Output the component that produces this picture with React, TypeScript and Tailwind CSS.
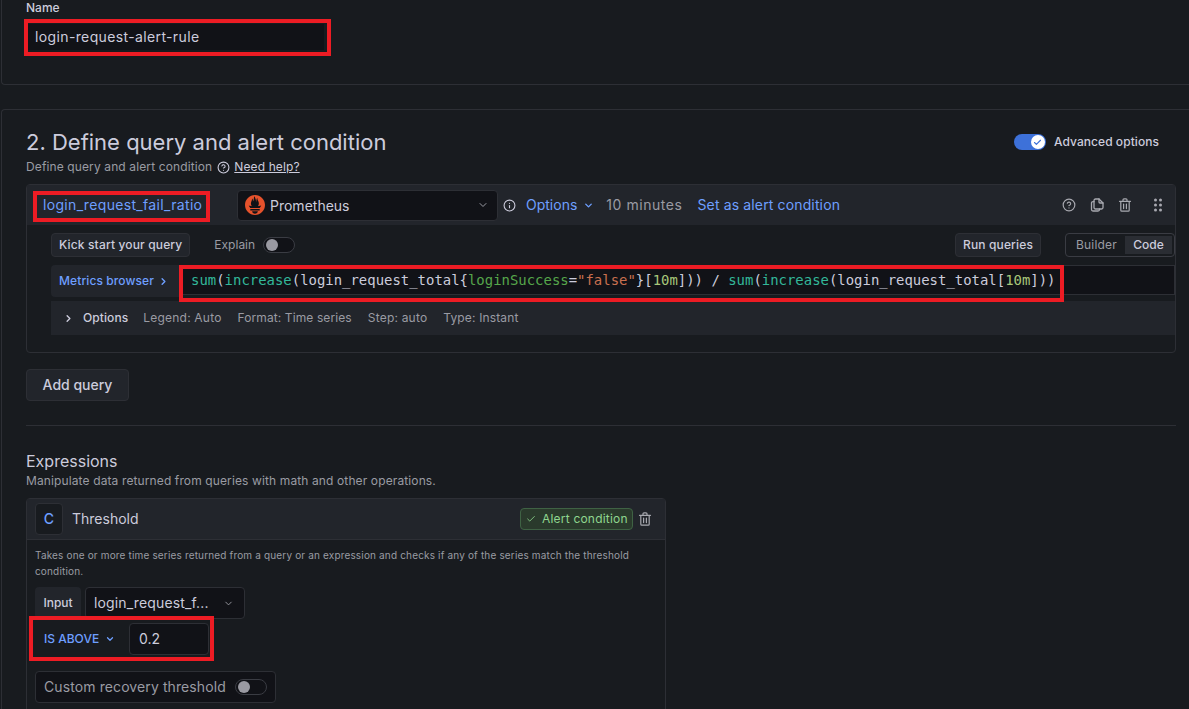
import React from "react";
import { ChevronDown, ChevronRight, CircleHelp, Info, Check } from "lucide-react";
import { SiPrometheus } from "react-icons/si";

function Mark({ cls }: { cls: string }) {
  return <div className={"absolute border-[4px] border-[#ed1c24] pointer-events-none " + cls} />;
}

function Toggle({ cls = "" }: { cls?: string }) {
  return (
    <span className={"flex items-center w-[32px] h-[16px] rounded-full border border-[#3a3c43] bg-[#111217] pl-[2px] " + cls}>
      <span className="w-[12px] h-[12px] rounded-full bg-[#9a9aa2]" />
    </span>
  );
}

function CopyIcon() {
  return (
    <svg viewBox="0 0 14 14" className="w-[14px] h-[14px]" fill="none" stroke="currentColor" strokeWidth="1.3" strokeLinejoin="round" strokeLinecap="round">
      <path d="M4 3.6H3A1.5 1.5 0 0 0 1.5 5.1v6.4A1.5 1.5 0 0 0 3 13h5a1.5 1.5 0 0 0 1.5-1.5V11" />
      <path d="M4 2.5A1.5 1.5 0 0 1 5.5 1H9l4 4v4.5a1.5 1.5 0 0 1-1.5 1.5h-6A1.5 1.5 0 0 1 4 9.5z" />
      <path d="M9 1v3a1 1 0 0 0 1 1h3" />
    </svg>
  );
}

function TrashIcon() {
  return (
    <svg viewBox="0 0 14 14" className="w-[14px] h-[14px]" fill="none" stroke="currentColor" strokeWidth="1.2" strokeLinejoin="round" strokeLinecap="round">
      <path d="M1.5 3.3h11M5 3.3V1.8a1 1 0 0 1 1-1h2a1 1 0 0 1 1 1v1.5M2.8 3.3v8.9a1 1 0 0 0 1 1h6.4a1 1 0 0 0 1-1V3.3M5.6 6v4.6M8.4 6v4.6" />
    </svg>
  );
}

function DragIcon() {
  return (
    <svg viewBox="0 0 16 16" className="w-[16px] h-[16px] ml-[4px]" fill="currentColor">
      <circle cx="5.5" cy="3" r="1.5" />
      <circle cx="10.5" cy="3" r="1.5" />
      <circle cx="5.5" cy="8" r="1.5" />
      <circle cx="10.5" cy="8" r="1.5" />
      <circle cx="5.5" cy="13" r="1.5" />
      <circle cx="10.5" cy="13" r="1.5" />
    </svg>
  );
}

export default function App() {
  return (
    <div className="relative h-[709px] w-[1189px] overflow-hidden bg-[#181b1f] text-[#ccccdc] text-sm" style={{ fontFamily: "Inter, 'Noto Sans', sans-serif" }}>
      <section className="h-[85px] ml-px border-l border-b border-[#2d2f35] rounded-bl-sm pl-[24px] pt-[1px]">
        <div className="text-xs font-medium leading-[13px] h-[23px]">Name</div>
        <div className="w-[298px] h-[26px] bg-[#111217] pl-[9px] flex items-center text-sm tracking-[0.37px]">login-request-alert-rule</div>
      </section>

      <section className="mt-[24px] ml-px h-[620px] border-l border-t border-[#2d2f35] rounded-tl-sm pl-[24px] pr-[13px]">
        <div className="flex items-start justify-between pt-[19px] h-[47px]">
          <h2 className="text-[22px] leading-[26px] font-normal">2. Define query and alert condition</h2>
          <div className="flex items-center gap-[8px] pr-[17px] pt-[5px]">
            <span className="flex items-center justify-end w-[32px] h-[16px] rounded-full bg-[#3d71d9] pr-[1px]">
              <span className="flex items-center justify-center w-[14px] h-[14px] rounded-full bg-white">
                <Check className="w-[9px] h-[9px] text-[#3d71d9]" strokeWidth={3} />
              </span>
            </span>
            <span className="text-xs font-medium tracking-[0.06px]">Advanced options</span>
          </div>
        </div>
        <div className="flex items-center text-xs text-[#9a9ba3] mt-[2px] h-[16px] tracking-[0.12px]">
          <span>Define query and alert condition</span>
          <CircleHelp className="ml-[5px] w-[13px] h-[13px] text-[#ccccdc]" />
          <span className="ml-[4px] underline text-[#ccccdc]">Need help?</span>
        </div>

        <div className="mt-[9px] h-[169px] border border-[#2d2f35] rounded-sm">
          <div className="flex items-center h-[40px] bg-[#22252b] pl-[16px] pr-[9px]">
            <span className="w-[194px] text-sm text-[#6e9fff] tracking-[0.33px]">login_request_fail_ratio</span>
            <div className="flex items-center w-[261px] h-[31px] bg-[#111217] border border-[#2d2f35] rounded-sm pl-[7px] pr-[8px]">
              <SiPrometheus className="w-[20px] h-[20px] text-[#e6522c]" />
              <span className="ml-[5px] flex-1 text-sm pt-px">Prometheus</span>
              <ChevronDown className="w-[12px] h-[12px] text-[#9a9ba3]" />
            </div>
            <Info className="ml-[5px] w-[13px] h-[13px]" />
            <span className="ml-[10px] text-[#6e9fff]">Options</span>
            <ChevronDown className="ml-[6px] w-[11px] h-[11px] text-[#6e9fff]" strokeWidth={3} />
            <span className="ml-[12px] text-[#9a9ba3] tracking-[0.55px]">10 minutes</span>
            <span className="ml-[15px] text-[#6e9fff] tracking-[0.14px]">Set as alert condition</span>
            <div className="ml-auto flex items-center gap-[14px] text-[#a8a9b0]">
              <CircleHelp className="w-[14px] h-[14px]" />
              <CopyIcon />
              <TrashIcon />
              <DragIcon />
            </div>
          </div>

          <div className="pl-[24px]">
            <div className="flex items-center h-[24px] mt-[8px] text-xs font-medium">
              <span className="flex items-center h-[24px] px-[7px] bg-[#22252b] border border-[#2d2f35] rounded-sm tracking-[0.15px]">Kick start your query</span>
              <span className="ml-[24px] text-[#9a9ba3] font-normal">Explain</span>
              <Toggle cls="ml-[8px]" />
              <span className="ml-auto flex items-center h-[24px] w-[86px] justify-center bg-[#22252b] border border-[#2d2f35] rounded-sm tracking-[0.15px]">Run queries</span>
              <div className="ml-[24px] flex items-center h-[24px] w-[110px] border border-[#3a3c43] rounded-sm p-[2px] font-normal">
                <span className="flex-1 text-center text-[#9a9ba3] tracking-[0.2px]">Builder</span>
                <span className="w-[47px] text-center leading-[18px] bg-[#2a2d33] font-medium">Code</span>
              </div>
            </div>

            <div className="flex h-[32px] mt-[8px]">
              <span className="flex items-center gap-[4px] w-[130px] pl-[8px] bg-[#22252b] text-xs font-medium text-[#6e9fff] rounded-l-sm tracking-[0.1px]">
                Metrics browser
                <ChevronRight className="w-[11px] h-[11px]" strokeWidth={3} />
              </span>
              <div className="flex-1 h-[30px] flex items-center bg-[#111217] border border-[#2d2f35] pl-[9px] pt-[1px] text-[13.95px] whitespace-pre" style={{ fontFamily: "'DejaVu Sans Mono', monospace" }}>
                <span className="text-[#33b89a]">sum</span>(<span className="text-[#33b89a]">increase</span>(login_request_total{"{"}<span className="text-[#56a64b]">loginSuccess</span>=<span className="text-[#c9704f]">"false"</span>{"}"}[<span className="text-[#a8c77a]">10m</span>])) / <span className="text-[#33b89a]">sum</span>(<span className="text-[#33b89a]">increase</span>(login_request_total[<span className="text-[#a8c77a]">10m</span>]))
              </div>
            </div>

            <div className="flex items-center h-[34px] mt-[4px] bg-[#22252b] text-xs text-[#9a9ba3] pl-[12px]">
              <ChevronRight className="w-[11px] h-[11px] text-[#ccccdc]" strokeWidth={3} />
              <span className="ml-[9px] font-medium text-[#ccccdc] tracking-[0.1px]">Options</span>
              <span className="ml-[15px] tracking-[0.2px]">Legend: Auto</span>
              <span className="ml-[16px] tracking-[0.1px]">Format: Time series</span>
              <span className="ml-[16px] tracking-[0.2px]">Step: auto</span>
              <span className="ml-[16px] tracking-[0.15px]">Type: Instant</span>
            </div>
          </div>
        </div>

        <button className="mt-[16px] block h-[32px] w-[103px] bg-[#22252b] border border-[#2d2f35] rounded-sm text-sm font-medium">Add query</button>

        <div className="mt-[24px] border-t border-[#2d2f35]" />

        <h3 className="mt-[26px] text-base leading-[19px]">Expressions</h3>
        <p className="mt-[2px] text-xs text-[#9a9ba3] leading-[16px] tracking-[0.12px]">Manipulate data returned from queries with math and other operations.</p>

        <div className="mt-[9px] w-[640px] h-[300px] border border-[#2d2f35] rounded-sm">
          <div className="flex items-center h-[41px] bg-[#22252b] border-b border-[#2d2f35] pl-[8px] pr-[13px]">
            <span className="flex items-center justify-center w-[28px] h-[32px] bg-[#181b1f] border border-[#2d2f35] rounded-sm text-sm font-medium text-[#6e9fff]">C</span>
            <span className="ml-[9px] text-sm">Threshold</span>
            <span className="ml-auto flex items-center gap-[6px] w-[113px] h-[22px] pl-[5px] bg-[#2a3a2c] border border-[#3f6244] rounded-sm text-xs text-[#8fd68f] tracking-[0.2px] whitespace-nowrap">
              <Check className="w-[10px] h-[10px] shrink-0" />
              Alert condition
            </span>
            <span className="ml-[5px] text-[#a8a9b0]"><TrashIcon /></span>
          </div>
          <div className="pl-[8px] pr-[8px] pt-[7px]">
            <p className="text-[10px] leading-[16px] text-[#9a9ba3] tracking-[0.16px]">Takes one or more time series returned from a query or an expression and checks if any of the series match the threshold condition.</p>
            <div className="flex items-center mt-[8px] h-[32px]">
              <span className="flex items-center justify-center w-[46px] h-[32px] bg-[#22252b] text-xs font-medium rounded-sm">Input</span>
              <span className="ml-[4px] flex items-center w-[160px] h-[32px] bg-[#111217] border border-[#2d2f35] rounded-sm pl-[8px] text-sm tracking-[0.15px]">
                login_request_f...
                <ChevronDown className="ml-[14px] w-[11px] h-[11px] text-[#9a9ba3]" />
              </span>
            </div>
            <div className="flex items-center h-[32px] mt-[4px]">
              <span className="flex items-center w-[94px] pl-[9px] text-xs font-medium text-[#6e9fff]">
                IS ABOVE
                <ChevronDown className="ml-[6px] w-[10px] h-[10px]" strokeWidth={3} />
              </span>
              <span className="flex items-center w-[80px] h-[32px] bg-[#111217] border border-[#2d2f35] rounded-sm pl-[9px] text-sm">0.2</span>
            </div>
            <div className="flex items-center w-[241px] h-[32px] mt-[16px] bg-[#111217] border border-[#2d2f35] rounded-sm pl-[8px] text-sm text-[#9a9ba3] tracking-[0.1px]">
              Custom recovery threshold
              <Toggle cls="ml-[9px]" />
            </div>
          </div>
        </div>
      </section>

      <Mark cls="left-[24px] top-[19px] w-[307px] h-[37px]" />
      <Mark cls="left-[33px] top-[191px] w-[177px] h-[31px]" />
      <Mark cls="left-[179px] top-[265px] w-[885px] h-[37px]" />
      <Mark cls="left-[29px] top-[616px] w-[185px] h-[45px]" />
    </div>
  );
}
